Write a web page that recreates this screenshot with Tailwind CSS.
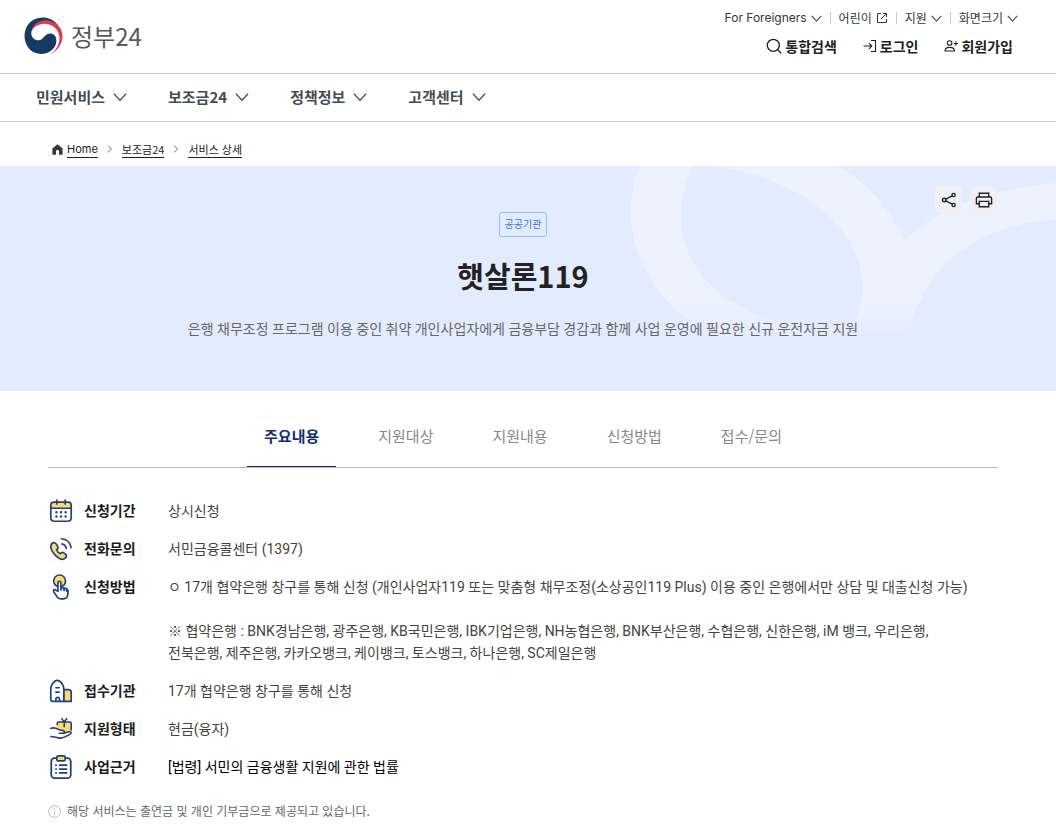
<!DOCTYPE html>
<html lang="ko">
<head>
<meta charset="utf-8">
<meta name="viewport" content="width=device-width, initial-scale=1">
<title>햇살론119 | 정부24</title>
<script src="https://cdn.jsdelivr.net/npm/@tailwindcss/browser@4"></script>
</head>
<body class="bg-white font-['Noto_Sans_CJK_KR','Noto_Sans',sans-serif] text-[14px] leading-[22px] text-[#444]">
<svg class="hidden" aria-hidden="true">
  <symbol id="chev" viewBox="0 0 12 12"><path d="M.8 3.2 6 8.8l5.2-5.6" fill="none" stroke="currentColor" stroke-width="1.1"/></symbol>
  <symbol id="crumb" viewBox="0 0 6 8"><path d="m1 .7 3.6 3.3L1 7.3" fill="none" stroke="currentColor" stroke-width="1"/></symbol>
</svg>

<header>
  <div class="flex h-[74px] items-start justify-between border-b border-[#cdcdcf] pl-6">
    <a href="#" class="mt-4 flex items-center gap-2 text-[24px] leading-10 text-[#58595b]">
      <svg class="h-[38px] w-[39px]" viewBox="71 50 117 112" aria-hidden="true">
        <path fill="#173a64" d="M175 76C150 40 100 45 82 74C60 108 78 158 120 160C150 160 170 140 168 117C166 98 148 94 136 104C126 114 122 120 112 119C98 118 90 104 94 90C100 68 140 52 175 76Z"/>
        <path fill="#e03c47" d="M94 92C98 66 124 55 148 60C176 66 190 92 186 114C182 136 168 152 152 160C168 148 180 128 177 106C172 80 152 70 132 69C114 70 100 78 94 92Z"/>
      </svg>
      정부24
    </a>
    <div class="pt-2">
      <div class="flex h-5 items-center justify-end gap-2 pr-[38px] text-[12px] leading-5 text-[#33363d]">
        <button type="button" class="flex items-center gap-1"><span class="font-['Inter']">For Foreigners</span><svg class="size-[11px]"><use href="#chev"/></svg></button>
        <span class="h-3 w-px bg-[#c6c9cf]"></span>
        <a href="#" class="flex items-center gap-1">어린이<svg class="size-3" viewBox="0 0 12 12" fill="none" stroke="currentColor"><path d="M5 1.5H1.5v9h9V7M7 1.5h3.5V5M10.5 1.5 5 7"/></svg></a>
        <span class="h-3 w-px bg-[#c6c9cf]"></span>
        <button type="button" class="flex items-center gap-1">지원<svg class="size-[11px]"><use href="#chev"/></svg></button>
        <span class="h-3 w-px bg-[#c6c9cf]"></span>
        <button type="button" class="flex items-center gap-1">화면크기<svg class="size-[11px]"><use href="#chev"/></svg></button>
      </div>
      <div class="mt-[7px] flex h-[22px] items-center justify-end gap-[26px] pr-[43px] font-bold text-[#1e2124]">
        <button type="button" class="flex items-center gap-[3px]"><svg class="size-4" viewBox="0 0 16 16" fill="none" stroke="currentColor" stroke-width="1.3"><circle cx="7.3" cy="7.3" r="6"/><path d="m11.6 11.6 3.6 3.6"/></svg>통합검색</button>
        <a href="#" class="flex items-center gap-[3px]"><svg class="size-[14px]" viewBox="0 0 14 14" fill="none" stroke="currentColor" stroke-width="1.1"><path d="M.5 7h8M6 4.2 8.8 7 6 9.8M8 1.5h4.5v11H8"/></svg>로그인</a>
        <a href="#" class="flex items-center gap-[3px]"><svg class="size-[14px]" viewBox="0 0 14 14" fill="none" stroke="currentColor" stroke-width="1.1"><circle cx="5.6" cy="4" r="2.3"/><path d="M1 12c0-2.4 1.4-3.6 4.6-3.6s4.900 1.200 4.900 3.600zM11.800 2.600v4M9.800 4.600h4"/></svg>회원가입</a>
      </div>
    </div>
  </div>
  <nav aria-label="주 메뉴" class="flex h-12 items-center gap-[41px] border-b border-[#cdcdd5] pb-[2px] pl-9 text-[15px] font-bold text-[#464c53]">
    <button type="button" class="flex items-center gap-2">민원서비스<svg class="size-[14px]"><use href="#chev"/></svg></button>
    <button type="button" class="flex items-center gap-2">보조금24<svg class="size-[14px]"><use href="#chev"/></svg></button>
    <button type="button" class="flex items-center gap-2">정책정보<svg class="size-[14px]"><use href="#chev"/></svg></button>
    <button type="button" class="flex items-center gap-2">고객센터<svg class="size-[14px]"><use href="#chev"/></svg></button>
  </nav>
</header>

<nav aria-label="현재 위치" class="flex h-11 items-center pl-[52px] pt-[10px] text-[11px] leading-4 text-[#1e2124]">
  <svg class="mr-1 size-[11px]" viewBox="0 0 11 11" fill="#33363d" aria-hidden="true"><path d="M5.500.3 10.600 4.600V10.700H7V7.200a1.500 1.500 0 0 0-3 0v3.500H.4V4.600z"/></svg>
  <a href="#" class="border-b border-[#1e2124] font-['Inter']">Home</a>
  <svg class="mx-[9px] h-2 w-[6px] text-[#6d7882]"><use href="#crumb"/></svg>
  <a href="#" class="border-b border-[#1e2124]">보조금24</a>
  <svg class="mx-[9px] h-2 w-[6px] text-[#6d7882]"><use href="#crumb"/></svg>
  <a href="#" class="border-b border-[#1e2124]">서비스 상세</a>
</nav>

<main>
  <section class="relative bg-[#e3ecfe] pb-[50px] pl-12 pr-[58px] pt-[46px] text-center">
    <svg class="absolute right-0 top-0 h-full" viewBox="600 0 456 225" preserveAspectRatio="xMaxYMin meet" aria-hidden="true">
      <defs><linearGradient id="fade" gradientUnits="userSpaceOnUse" x1="0" y1="140" x2="0" y2="170"><stop offset="0" stop-color="#ecf2fe"/><stop offset="1" stop-color="#ecf2fe" stop-opacity="0"/></linearGradient></defs>
      <path fill="url(#fade)" fill-rule="evenodd" d="M640 0C622 38 627 106 687 153L714 175H908C915 120 960 58 1056 54V17C995 22 940 40 905 74C890 44 868 17 838 0ZM693 0C662 64 690 130 777 156C800 162 850 172 857 151C882 85 820 12 710 0Z"/>
    </svg>
    <div class="absolute right-[59px] top-5 flex gap-2">
      <button type="button" aria-label="공유" class="flex size-[27px] items-center justify-center rounded-md bg-[#eff0f3] text-[#222]"><svg class="size-4" viewBox="0 0 16 16" fill="none" stroke="currentColor" stroke-width="1.4"><circle cx="3.2" cy="8" r="1.8"/><circle cx="12.6" cy="3" r="1.6"/><circle cx="12.6" cy="13" r="1.6"/><path d="m4.9 7.1 6.2-3.3M4.9 8.9l6.2 3.3"/></svg></button>
      <button type="button" aria-label="인쇄" class="flex size-[27px] items-center justify-center rounded-md bg-[#eff0f3] text-[#222]"><svg class="size-[18px]" viewBox="0 0 18 18" fill="none" stroke="currentColor" stroke-width="1.4"><path d="M4.300 6V2.200h9.400V6M4.300 12.700H1.400V7.500Q1.400 6 2.900 6h12.200q1.500 0 1.500 1.500v5.200h-2.900M4.300 10.400h9.400v5.400H4.300z"/></svg></button>
    </div>
    <div class="relative">
      <span class="inline-block h-[25px] rounded-[3px] border border-[#94bdf2] px-[5px] align-top text-[10px] leading-[22px] text-[#3b6fe0]">공공기관</span>
      <h1 class="mt-[18px] text-[29px] font-bold leading-10 text-[#222]">햇살론119</h1>
      <p class="mt-[22px] font-['Roboto','Noto_Sans_CJK_KR',sans-serif] leading-6 text-[#666]">은행 채무조정 프로그램 이용 중인 취약 개인사업자에게 금융부담 경감과 함께 사업 운영에 필요한 신규 운전자금 지원</p>
    </div>
  </section>

  <div class="pl-12 pr-[58px]">
    <nav aria-label="상세 정보" class="flex justify-center gap-[25px] border-b border-[#b8b8b8] pt-[33px] text-[15px] leading-6 text-[#888]">
      <a href="#main" aria-current="true" class="border-b border-[#0f2f6f] px-[17px] pb-[18px] font-bold text-[#0f2f6f]">주요내용</a>
      <a href="#target" class="px-[17px] pb-[19px]">지원대상</a>
      <a href="#support" class="px-[17px] pb-[19px]">지원내용</a>
      <a href="#apply" class="px-[17px] pb-[19px]">신청방법</a>
      <a href="#contact" class="px-[17px] pb-[19px]">접수/문의</a>
    </nav>

    <dl id="main" class="grid grid-cols-[120px_1fr] gap-y-4 pt-8 font-['Roboto','Noto_Sans_CJK_KR',sans-serif]">
      <dt class="flex h-[22px] items-center gap-[10px] font-bold text-[#1c1c1c]">
        <svg class="size-[26px]" viewBox="-1 -1 28 28" fill="none" stroke="#213f7d" stroke-width="1.8" stroke-linecap="round"><path fill="#fbdc6b" d="M2 10V7q0-3.500 3.500-3.500h15Q24 3.500 24 7v3z"/><path d="M2 9v11q0 4 4 4h14q4 0 4-4V9M8.500 1.200v4.200M17.500 1.200v4.200"/><path stroke-width="2.600" d="M8 14.300h.01M13 14.300h.01M18 14.300h.01M8 19h.01M13 19h.01M18 19h.01"/></svg>
        신청기간
      </dt>
      <dd>상시신청</dd>
      <dt class="flex h-[22px] items-center gap-[10px] font-bold text-[#1c1c1c]">
        <svg class="size-[26px]" viewBox="-1 -1 28 28" fill="none" stroke="#213f7d" stroke-width="1.800" stroke-linecap="round" stroke-linejoin="round"><path fill="#fbdc6b" d="M3.200 7.200C5 5.600 7 6 8.200 8L9.500 10.400C10.200 11.800 9.400 13 8.200 13.800C9 16 10.500 17.300 12.500 18C13.300 16.600 14.800 16.300 16 17.200L18.200 18.900C19.400 20 19 21.600 17.600 22.800C15.200 25 11.500 24 7.600 20.400C3.500 16.700.200 11 3.200 7.200Z"/><path d="M14 7.500c2.600.5 4.200 2.300 4.600 4.800M13.500 2c5.500.3 9.600 4 10.300 9.500"/></svg>
        전화문의
      </dt>
      <dd>서민금융콜센터 (1397)</dd>
      <dt class="flex h-[22px] items-center gap-[10px] font-bold text-[#1c1c1c]">
        <svg class="size-[26px]" viewBox="-1 -1 28 28" fill="none" stroke="#213f7d" stroke-width="1.800" stroke-linecap="round" stroke-linejoin="round"><circle cx="11.500" cy="6.500" r="6.400" fill="#fbdc6b"/><path fill="#fff" d="M9.700 17.500V8.500q0-1.700 1.600-1.700t1.600 1.700v5l4.200.8q3.800.7 3.600 3.800l-.5 3.500q-.6 4.200-4.400 4.200h-3q-2.600 0-4-2.200L5.300 18.400q-1-2 .6-2.600 1-.4 2.200 1z"/><path d="M13 13.500v3M16.300 14.200v2.600M19 15.500v2"/></svg>
        신청방법
      </dt>
      <dd>ㅇ 17개 협약은행 창구를 통해 신청 (개인사업자119 또는 맞춤형 채무조정(소상공인119 Plus) 이용 중인 은행에서만 상담 및 대출신청 가능)<br><br>※ 협약은행 : BNK경남은행, 광주은행, KB국민은행, IBK기업은행, NH농협은행, BNK부산은행, 수협은행, 신한은행, iM 뱅크, 우리은행,<br>전북은행, 제주은행, 카카오뱅크, 케이뱅크, 토스뱅크, 하나은행, SC제일은행</dd>
      <dt class="flex h-[22px] items-center gap-[10px] font-bold text-[#1c1c1c]">
        <svg class="size-[26px]" viewBox="-1 -1 28 28" fill="none" stroke="#213f7d" stroke-width="1.800" stroke-linecap="round" stroke-linejoin="round"><path fill="#fbdc6b" d="M16 11.500h5q3 0 3 3v9.700h-8z"/><path fill="#fff" d="M3.500 24.200Q2 24.200 2 22.500V11Q2 6 6.500 2.500q2.500-2 5 0Q16 6 16 11v13.200z"/><path d="M7.500 9.500h3.500M7.500 14.200h3.500M7.500 24v-2q0-2.200 1.900-2.200t1.900 2.200v2"/></svg>
        접수기관
      </dt>
      <dd>17개 협약은행 창구를 통해 신청</dd>
      <dt class="flex h-[22px] items-center gap-[10px] font-bold text-[#1c1c1c]">
        <svg class="size-[26px]" viewBox="-1 -1 28 28" fill="none" stroke="#213f7d" stroke-width="1.700" stroke-linecap="round" stroke-linejoin="round"><rect x="8.500" y="5.500" width="15.500" height="11.500" rx="1.500" fill="#fbdc6b" stroke="none"/><path d="M9 8.500V7Q9 5.500 10.500 5.500H22.500Q24 5.500 24 7V14M16.500 5.500v5M16.500 5.500 13.800 1.800M16.500 5.500l2.700-3.700"/><path fill="#fff" stroke="none" d="M2 12h6l3 2.500 4.500.5v3l6-2 3 1-5 5H8l-6-2z"/><path d="M2 12.300c3-1 5.500-.6 7.500.9 2 1.300 4.500 1 6 1.500 1.800.8 1.300 2.800-.5 2.800h-4H16l5.500-1.500q2.300-.3 2.500 1c0 1-1.300 1.800-2.800 2.600-4 2.300-6.500 3.600-10.500 3.200-3-.4-5-1.600-8.700-1.800"/></svg>
        지원형태
      </dt>
      <dd>현금(융자)</dd>
      <dt class="flex h-[22px] items-center gap-[10px] font-bold text-[#1c1c1c]">
        <svg class="size-[26px]" viewBox="-1 -1 28 28" fill="none" stroke="#213f7d" stroke-width="1.900" stroke-linecap="round" stroke-linejoin="round"><rect x="2.500" y="3.500" width="21" height="21.500" rx="3.500"/><rect x="8.500" y="1" width="9" height="5.500" rx="1.500" fill="#fbdc6b"/><path d="M11.500 11h7.500M11.500 15.200h7.500M11.500 19.400h7.500M7.500 11h.3M7.500 15.200h.3M7.500 19.400h.3"/></svg>
        사업근거
      </dt>
      <dd><a href="#" class="text-black">[법령] 서민의 금융생활 지원에 관한 법률</a></dd>
    </dl>

    <p class="mt-[23px] flex items-center gap-[6px] text-[12px] leading-5 text-[#666]">
      <svg class="size-[13px]" viewBox="0 0 13 13" fill="none" stroke="#bbb" aria-hidden="true"><circle cx="6.500" cy="6.500" r="5.900"/><path d="M6.500 5.500v4.300M6.500 3.200v1.200"/></svg>
      해당 서비스는 출연금 및 개인 기부금으로 제공되고 있습니다.
    </p>
  </div>
</main>
</body>
</html>
